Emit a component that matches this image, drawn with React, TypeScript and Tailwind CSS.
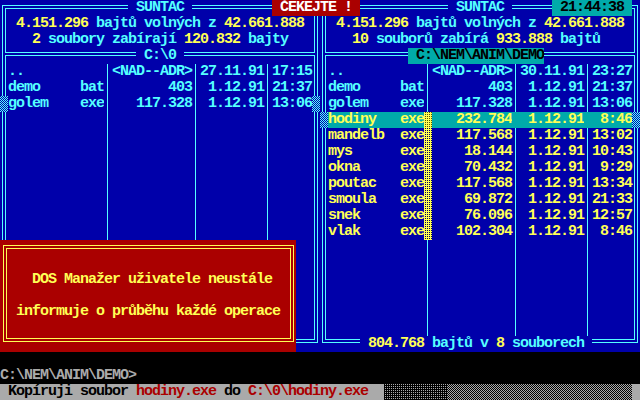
import React from 'react';

type F = {
  n: string;
  e: string;
  s: string;
  d: string;
  t: string;
  y?: boolean;
  cur?: boolean;
  mark?: boolean;
  side?: boolean;
};

const DITHER_CYAN =
  'w-[8px] h-[16px] shrink-0 bg-[image:repeating-conic-gradient(#55ffff_0_25%,#0000aa_0_50%)] bg-[length:2px_2px] bg-size-[2px_2px]';
const DITHER_YEL =
  'w-[8px] h-[16px] shrink-0 bg-[image:conic-gradient(#000055_0_25%,#ffff55_0)] bg-[length:2px_2px] bg-size-[2px_2px]';
const DITHER_YEL_CUR =
  'w-[8px] h-[16px] shrink-0 bg-[image:conic-gradient(#555500_0_25%,#ffff55_0)] bg-[length:2px_2px] bg-size-[2px_2px]';

function Side({ marker }: { marker?: boolean }) {
  if (marker) return <div className={DITHER_CYAN} />;
  return (
    <div className="w-[8px] h-[16px] shrink-0 pl-[2px]">
      <div className="w-[4px] h-full border-x border-[#55ffff]" />
    </div>
  );
}

function ColDiv({ cur, mark }: { cur?: boolean; mark?: boolean }) {
  if (mark) return <div className={cur ? DITHER_YEL_CUR : DITHER_YEL} />;
  if (cur) return <div className="w-[8px] h-[16px] shrink-0 bg-[#00aaaa]" />;
  return (
    <div className="w-[8px] h-[16px] shrink-0 pl-[3px]">
      <div className="w-[1px] h-full bg-[#55ffff]" />
    </div>
  );
}

function CornerTL() {
  return (
    <div className="w-[8px] h-[16px] shrink-0 pt-[5px] pl-[2px]">
      <div className="h-[11px] border-l border-t border-[#55ffff]">
        <div className="mt-[2px] ml-[2px] h-[9px] border-l border-t border-[#55ffff]" />
      </div>
    </div>
  );
}

function CornerTR() {
  return (
    <div className="w-[8px] h-[16px] shrink-0 pt-[5px] pr-[2px]">
      <div className="h-[11px] border-r border-t border-[#55ffff]">
        <div className="mt-[2px] mr-[2px] h-[9px] border-r border-t border-[#55ffff]" />
      </div>
    </div>
  );
}

function CornerBL() {
  return (
    <div className="w-[8px] h-[16px] shrink-0 pl-[2px]">
      <div className="h-[7px] border-l border-b border-[#55ffff]">
        <div className="ml-[2px] h-[4px] border-l border-b border-[#55ffff]" />
      </div>
    </div>
  );
}

function CornerBR() {
  return (
    <div className="w-[8px] h-[16px] shrink-0 pr-[2px]">
      <div className="h-[7px] border-r border-b border-[#55ffff]">
        <div className="mr-[2px] h-[4px] border-r border-b border-[#55ffff]" />
      </div>
    </div>
  );
}

function SepL() {
  return (
    <div className="w-[8px] h-[16px] shrink-0 pl-[2px] flex">
      <div className="w-[1px] h-full bg-[#55ffff]" />
      <div className="w-[2px]" />
      <div className="flex-1 flex flex-col">
        <div className="h-[5px] border-l border-b border-[#55ffff]" />
        <div className="h-[2px]" />
        <div className="flex-1 border-l border-t border-[#55ffff]" />
      </div>
    </div>
  );
}

function SepR() {
  return (
    <div className="w-[8px] h-[16px] shrink-0 pr-[2px] flex">
      <div className="flex-1 flex flex-col">
        <div className="h-[5px] border-r border-b border-[#55ffff]" />
        <div className="h-[2px]" />
        <div className="flex-1 border-r border-t border-[#55ffff]" />
      </div>
      <div className="w-[2px]" />
      <div className="w-[1px] h-full bg-[#55ffff]" />
    </div>
  );
}

function FillTop({ w }: { w: string }) {
  return (
    <div className={`${w} h-[16px] shrink-0 pt-[5px]`}>
      <div className="h-[4px] border-y border-[#55ffff]" />
    </div>
  );
}

function FillSep({ w }: { w: string }) {
  return (
    <div className={`${w} h-[16px] shrink-0 pt-[4px]`}>
      <div className="h-[4px] border-y border-[#55ffff]" />
    </div>
  );
}

function FillBot({ w }: { w: string }) {
  return (
    <div className={`${w} h-[16px] shrink-0 pt-[3px]`}>
      <div className="h-[4px] border-y border-[#55ffff]" />
    </div>
  );
}

function FileRow({ f }: { f: F }) {
  const txt = f.y ? 'text-[#ffff55]' : 'text-[#55ffff]';
  const bg = f.cur ? 'bg-[#00aaaa]' : '';
  return (
    <div className={`flex h-[16px] ${txt}`}>
      <Side marker={f.side} />
      <div className={`w-[96px] shrink-0 flex ${bg}`}>
        <span className="w-[72px] whitespace-pre overflow-hidden">{f.n}</span>
        <span className="w-[24px] whitespace-pre overflow-hidden">{f.e}</span>
      </div>
      <ColDiv cur={f.cur} mark={f.mark} />
      <div className={`w-[80px] shrink-0 text-right whitespace-pre ${bg}`}>{f.s}</div>
      <ColDiv cur={f.cur} />
      <div className={`w-[64px] shrink-0 text-right whitespace-pre ${bg}`}>{f.d}</div>
      <ColDiv cur={f.cur} />
      <div className={`w-[40px] shrink-0 text-right whitespace-pre ${bg}`}>{f.t}</div>
      <Side marker={f.side} />
    </div>
  );
}

function EmptyRow() {
  return (
    <div className="flex h-[16px]">
      <Side />
      <div className="w-[96px] shrink-0" />
      <ColDiv />
      <div className="w-[80px] shrink-0" />
      <ColDiv />
      <div className="w-[64px] shrink-0" />
      <ColDiv />
      <div className="w-[40px] shrink-0" />
      <Side />
    </div>
  );
}

function InfoRow({ pad, children }: { pad: string; children: React.ReactNode }) {
  return (
    <div className="flex h-[16px]">
      <Side />
      <div className={`w-[304px] shrink-0 whitespace-pre text-[#55ffff] ${pad}`}>{children}</div>
      <Side />
    </div>
  );
}

const Y = ({ children }: { children: React.ReactNode }) => (
  <span className="text-[#ffff55]">{children}</span>
);

const leftFiles: F[] = [
  { n: '..', e: '', s: '<NAD--ADR>', d: '27.11.91', t: '17:15' },
  { n: 'demo', e: 'bat', s: '403', d: '1.12.91', t: '21:37' },
  { n: 'golem', e: 'exe', s: '117.328', d: '1.12.91', t: '13:06', side: true },
];

const rightFiles: F[] = [
  { n: '..', e: '', s: '<NAD--ADR>', d: '30.11.91', t: '23:27' },
  { n: 'demo', e: 'bat', s: '403', d: '1.12.91', t: '21:37' },
  { n: 'golem', e: 'exe', s: '117.328', d: '1.12.91', t: '13:06' },
  { n: 'hodiny', e: 'exe', s: '232.784', d: '1.12.91', t: '8:46', y: true, cur: true, mark: true, side: true },
  { n: 'mandelb', e: 'exe', s: '117.568', d: '1.12.91', t: '13:02', y: true, mark: true },
  { n: 'mys', e: 'exe', s: '18.144', d: '1.12.91', t: '10:43', y: true, mark: true },
  { n: 'okna', e: 'exe', s: '70.432', d: '1.12.91', t: '9:29', y: true, mark: true },
  { n: 'poutac', e: 'exe', s: '117.568', d: '1.12.91', t: '13:34', y: true, mark: true },
  { n: 'smoula', e: 'exe', s: '69.872', d: '1.12.91', t: '21:33', y: true, mark: true },
  { n: 'snek', e: 'exe', s: '76.096', d: '1.12.91', t: '12:57', y: true, mark: true },
  { n: 'vlak', e: 'exe', s: '102.304', d: '1.12.91', t: '8:46', y: true, mark: true },
];

function LeftPanel() {
  return (
    <div className="w-[320px] h-[352px] bg-[#0000aa] flex flex-col shrink-0">
      <div className="flex h-[16px]">
        <CornerTL />
        <FillTop w="w-[120px]" />
        <div className="w-[64px] shrink-0 whitespace-pre text-[#55ffff]"> SUNTAC </div>
        <FillTop w="w-[120px]" />
        <CornerTR />
      </div>
      <InfoRow pad="pl-[8px]">
        <Y>4.151.296</Y> bajtů volných z <Y>42.661.888</Y>
      </InfoRow>
      <InfoRow pad="pl-[24px]">
        <Y>2</Y> soubory zabírají <Y>120.832</Y> bajty
      </InfoRow>
      <div className="flex h-[16px]">
        <SepL />
        <FillSep w="w-[128px]" />
        <div className="w-[48px] shrink-0 whitespace-pre text-[#55ffff]">{' C:\\0 '}</div>
        <FillSep w="w-[128px]" />
        <SepR />
      </div>
      {leftFiles.map((f, i) => (
        <FileRow key={i} f={f} />
      ))}
      {Array.from({ length: 14 }).map((_, i) => (
        <EmptyRow key={i} />
      ))}
      <div className="flex h-[16px]">
        <CornerBL />
        <FillBot w="w-[304px]" />
        <CornerBR />
      </div>
    </div>
  );
}

function RightPanel() {
  return (
    <div className="w-[320px] h-[352px] bg-[#0000aa] flex flex-col shrink-0">
      <div className="flex h-[16px]">
        <CornerTL />
        <FillTop w="w-[120px]" />
        <div className="w-[64px] shrink-0 whitespace-pre text-[#55ffff]"> SUNTAC </div>
        <FillTop w="w-[40px]" />
        <div className="w-[80px] shrink-0 whitespace-pre bg-[#00aaaa] text-black"> 21:44:38 </div>
        <CornerTR />
      </div>
      <InfoRow pad="pl-[8px]">
        <Y>4.151.296</Y> bajtů volných z <Y>42.661.888</Y>
      </InfoRow>
      <InfoRow pad="pl-[24px]">
        <Y>10</Y> souborů zabírá <Y>933.888</Y> bajtů
      </InfoRow>
      <div className="flex h-[16px]">
        <SepL />
        <FillSep w="w-[80px]" />
        <div className="w-[136px] shrink-0 whitespace-pre bg-[#00aaaa] text-black pl-[8px]">
          {'C:\\NEM\\ANIM\\DEMO'}
        </div>
        <FillSep w="w-[88px]" />
        <SepR />
      </div>
      {rightFiles.map((f, i) => (
        <FileRow key={i} f={f} />
      ))}
      {Array.from({ length: 6 }).map((_, i) => (
        <EmptyRow key={i} />
      ))}
      <div className="flex h-[16px]">
        <CornerBL />
        <FillBot w="w-[32px]" />
        <div className="w-[232px] shrink-0 whitespace-pre text-[#55ffff]">
          {' '}
          <Y>804.768</Y> bajtů v <Y>8</Y> souborech{' '}
        </div>
        <FillBot w="w-[40px]" />
        <CornerBR />
      </div>
    </div>
  );
}

export default function App() {
  return (
    <div className="relative w-[640px] h-[400px] bg-black overflow-hidden font-['Liberation_Mono',monospace] font-bold text-[15px] leading-[16px] tracking-[-1px]">
      <div className="flex">
        <LeftPanel />
        <RightPanel />
      </div>
      <div className="h-[16px]" />
      <div className="h-[16px] whitespace-pre text-[#aaaaaa]">{'C:\\NEM\\ANIM\\DEMO>'}</div>
      <div className="flex h-[16px]">
        <div className="w-[384px] shrink-0 bg-[#aaaaaa] whitespace-pre text-black">
          {' Kopíruji soubor '}
          <span className="text-[#aa0000]">hodiny.exe</span>
          {' do '}
          <span className="text-[#aa0000]">{'C:\\0\\hodiny.exe'}</span>
        </div>
        <div className="w-[64px] shrink-0 bg-[image:conic-gradient(#aaaaaa_0_25%,#000000_0)] bg-[length:2px_2px] bg-size-[2px_2px]" />
        <div className="w-[184px] shrink-0 bg-[image:repeating-conic-gradient(#aaaaaa_0_25%,#000000_0_50%)] bg-[length:2px_2px] bg-size-[2px_2px]" />
        <div className="w-[8px] shrink-0 bg-[#aaaaaa]" />
      </div>

      {/* notification badge over the top border */}
      <div className="absolute left-[272px] top-0 w-[88px] h-[16px] bg-[#aa0000] text-white whitespace-pre pl-[8px]">
        ČEKEJTE !
      </div>

      {/* dialog over the left panel */}
      <div className="absolute left-0 top-[240px] w-[296px] h-[112px] bg-[#aa0000] pt-[5px] pl-[3px] pr-[2px]">
        <div className="h-[97px] border border-[#ffff55] p-[2px]">
          <div className="h-full border border-[#ffff55] text-[#ffff55] flex flex-col pt-[23px] gap-[16px]">
            <div className="h-[16px] whitespace-pre pl-[25px]">DOS Manažer uživatele neustále</div>
            <div className="h-[16px] whitespace-pre pl-[9px]">informuje o průběhu každé operace</div>
          </div>
        </div>
      </div>
    </div>
  );
}
